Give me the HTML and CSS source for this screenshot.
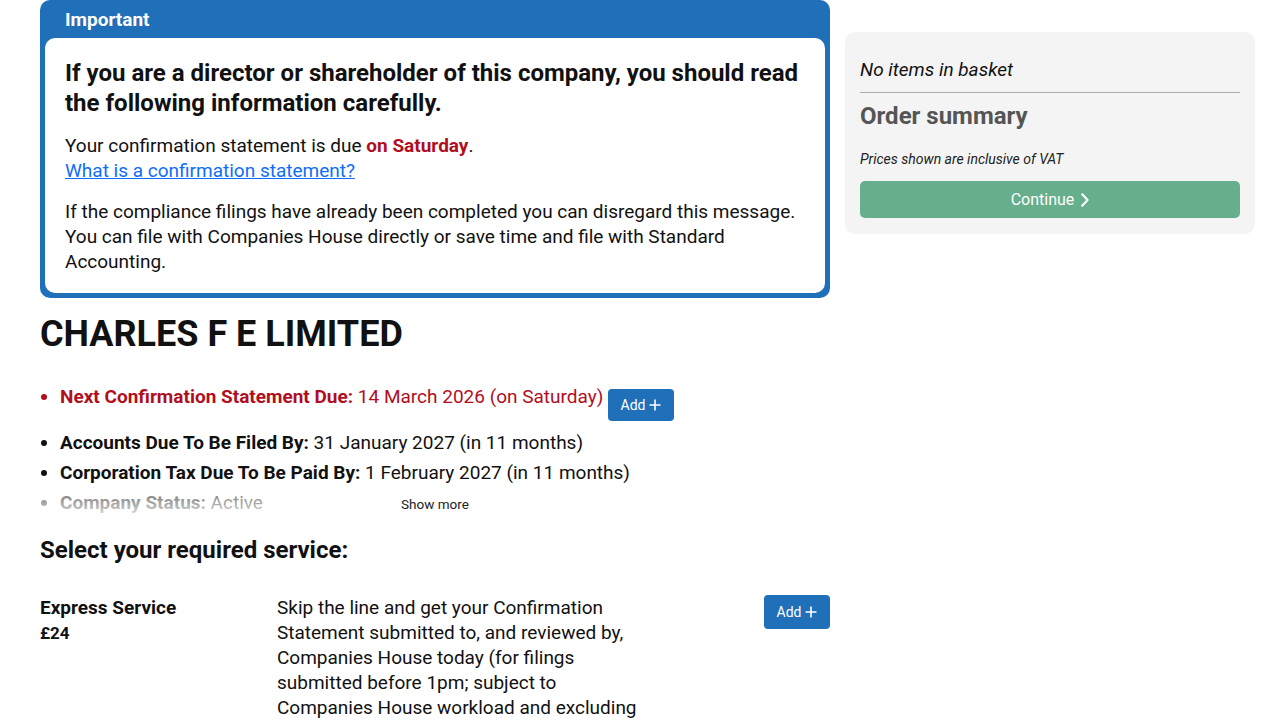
FILE: index.html
```html
<!DOCTYPE html>
<html lang="en">
<head>
<meta charset="utf-8">
<title>Charles F E Limited</title>
<link rel="stylesheet" href="styles.css">
</head>
<body>
<div class="page">
  <main class="main">
    <section class="alert">
      <div class="alert-title">Important</div>
      <div class="alert-body">
        <h2 class="alert-heading">If you are a director or shareholder of this company, you should read the following information carefully.</h2>
        <p>Your confirmation statement is due <strong class="due">on Saturday</strong>.<br><a href="#" class="link">What is a confirmation statement?</a></p>
        <p class="last">If the compliance filings have already been completed you can disregard this message. You can file with Companies House directly or save time and file with Standard Accounting.</p>
      </div>
    </section>

    <h1 class="company">CHARLES F E LIMITED</h1>

    <div class="facts">
      <ul class="fact-list">
        <li class="fact red"><strong>Next Confirmation Statement Due:</strong> 14 March 2026 (on Saturday) <button class="btn-add btn-inline">Add <svg class="plus" viewBox="0 0 12 12" width="12" height="12"><path d="M6 0.5v11M0.5 6h11" stroke="currentColor" stroke-width="1.6" fill="none"/></svg></button></li>
        <li class="fact"><strong>Accounts Due To Be Filed By:</strong> 31 January 2027 (in 11 months)</li>
        <li class="fact"><strong>Corporation Tax Due To Be Paid By:</strong> 1 February 2027 (in 11 months)</li>
        <li class="fact"><strong>Company Status:</strong> Active</li>
      </ul>
      <div class="fade"></div>
      <button class="show-more">Show more</button>
    </div>

    <h2 class="section-title">Select your required service:</h2>

    <div class="service">
      <div class="service-name">
        <div class="name">Express Service</div>
        <div class="price">£24</div>
      </div>
      <div class="service-desc">Skip the line and get your Confirmation Statement submitted to, and reviewed by, Companies House today (for filings submitted before 1pm; subject to Companies House workload and excluding weekends and bank holidays).</div>
      <div class="service-action">
        <button class="btn-add btn-service">Add <svg class="plus" viewBox="0 0 12 12" width="12" height="12"><path d="M6 0.5v11M0.5 6h11" stroke="currentColor" stroke-width="1.6" fill="none"/></svg></button>
      </div>
    </div>
  </main>

  <aside class="sidebar">
    <div class="basket">
      <p class="empty">No items in basket</p>
      <hr class="divider">
      <h3 class="summary-title">Order summary</h3>
      <p class="vat">Prices shown are inclusive of VAT</p>
      <button class="btn-continue">Continue <svg class="chev" viewBox="0 0 8 14" width="8" height="14"><path d="M1.2 1.2L6.6 7l-5.4 5.8" stroke="currentColor" stroke-width="2" fill="none" stroke-linecap="round" stroke-linejoin="round"/></svg></button>
    </div>
  </aside>
</div>
</body>
</html>
```

FILE: styles.css
```css
* { box-sizing: border-box; }

html, body {
  margin: 0;
  padding: 0;
  background: #fff;
}

body {
  font-family: Roboto, "Liberation Sans", Arial, sans-serif;
  color: #111;
  font-size: 19px;
  line-height: 25px;
}

.page {
  display: flex;
  align-items: flex-start;
  gap: 15px;
  padding-left: 40px;
  width: 1255px;
}

.main {
  width: 790px;
  flex: none;
}

/* Important alert */
.alert {
  background: #1f6fb9;
  border-radius: 10px;
  padding: 0 5px 5px;
}

.alert-title {
  color: #fff;
  font-weight: 700;
  font-size: 19px;
  height: 38px;
  line-height: 39px;
  padding-left: 20px;
}

.alert-body {
  background: #fff;
  border-radius: 10px;
  padding: 20px 20px 19px;
}

.alert-heading {
  margin: 0 0 15px;
  font-size: 24px;
  line-height: 30px;
  font-weight: 700;
  color: #111;
}

.alert-body p {
  margin: 0 0 16px;
}

.alert-body p.last {
  margin-bottom: 0;
}

.due {
  color: #b10e1e;
  font-weight: 700;
}

.link {
  color: #0d6efd;
  text-decoration: underline;
}

/* Company */
.company {
  margin: 15px 0 0;
  font-size: 36px;
  line-height: 43px;
  font-weight: 700;
  color: #111;
}

.facts {
  position: relative;
  margin-top: 26px;
  height: 134px;
  overflow: hidden;
}

.fact-list {
  margin: 0;
  padding-left: 20px;
}

.fact {
  line-height: 30px;
}

.fact strong { font-weight: 700; }

.fact.red {
  color: #b10e1e;
  margin-bottom: 7px;
}

.fade {
  position: absolute;
  left: 0;
  right: 0;
  top: 106px;
  height: 30px;
  background: linear-gradient(to bottom, rgba(255,255,255,0.35), rgba(255,255,255,0.9));
}

.show-more {
  position: absolute;
  left: 50%;
  transform: translateX(-50%);
  top: 113px;
  border: 0;
  background: transparent;
  font-family: inherit;
  font-size: 13.5px;
  line-height: 18px;
  color: #222;
  padding: 0;
}

.btn-add {
  display: inline-flex;
  align-items: center;
  gap: 4px;
  background: #1f6fb9;
  color: #fff;
  border: 0;
  border-radius: 4px;
  font-family: inherit;
  font-size: 14px;
  line-height: 16px;
  padding: 0 12px;
  width: 66px;
  justify-content: center;
}

.btn-inline {
  height: 32px;
  vertical-align: top;
  margin-top: 7px;
}

.btn-service {
  height: 34px;
}

.plus { display: block; }

.section-title {
  margin: 19px 0 0;
  font-size: 24px;
  line-height: 30px;
  font-weight: 700;
  color: #111;
}

/* Service row */
.service {
  display: grid;
  grid-template-columns: 237px 364px 1fr;
  margin-top: 30px;
}

.service-name .name {
  font-weight: 700;
  line-height: 25px;
}

.service-name .price {
  font-weight: 700;
  font-size: 17px;
  line-height: 26px;
}

.service-desc {
  line-height: 25px;
}

.service-action {
  display: flex;
  justify-content: flex-end;
}

/* Sidebar */
.sidebar {
  width: 410px;
  flex: none;
  padding-top: 32px;
}

.basket {
  background: #f4f4f4;
  border-radius: 10px;
  padding: 15px 15px 16px;
}

.empty {
  margin: 10px 0 0;
  font-style: italic;
  line-height: 25px;
}

.divider {
  border: 0;
  border-top: 1px solid #aaa;
  margin: 10px 0 8px;
}

.summary-title {
  margin: 0;
  font-size: 24px;
  line-height: 30px;
  font-weight: 700;
  color: #555;
}

.vat {
  margin: 18px 0 12px;
  font-size: 14px;
  font-style: italic;
  line-height: 20px;
  color: #222;
}

.btn-continue {
  display: flex;
  width: 100%;
  height: 37px;
  align-items: center;
  justify-content: center;
  gap: 7px;
  background: #66ae8c;
  color: #fff;
  border: 0;
  border-radius: 5px;
  font-family: inherit;
  font-size: 16px;
}

.chev { display: block; margin-top: 1px; }
```
